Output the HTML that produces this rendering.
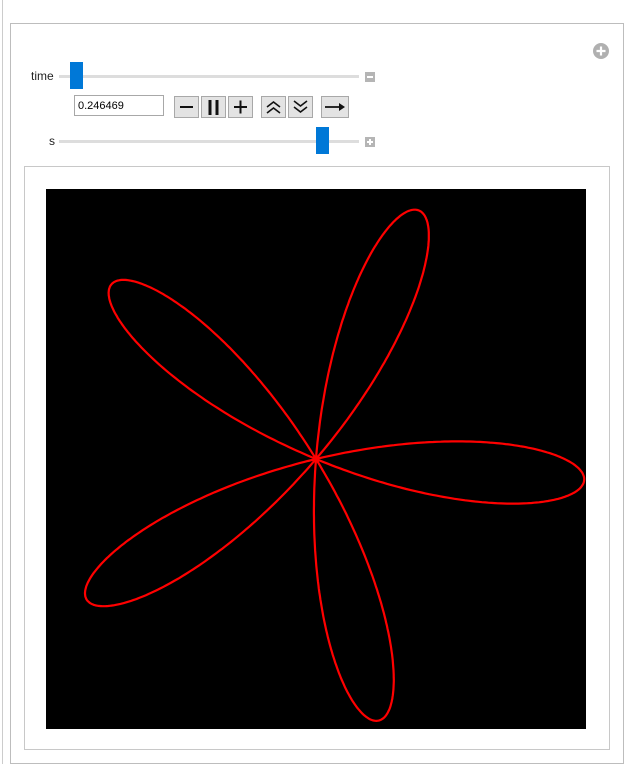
<!DOCTYPE html>
<html><head><style>
body{margin:0;width:636px;height:764px;background:#fff;position:relative;overflow:hidden;font-family:"Liberation Sans",sans-serif}
.a{position:absolute;box-sizing:border-box}
.btn{position:absolute;top:96px;height:22px;background:#e3e3e3;border:1px solid #a8a8a8;box-sizing:border-box}
</style></head><body>
<div class="a" style="left:0;top:0;width:3px;height:764px;border-right:1px solid #ccc"></div>
<div class="a" style="left:10px;top:23px;width:614px;height:741px;border:1px solid #bdbdbd"></div>
<svg class="a" style="left:592px;top:42px" width="18" height="18"><circle cx="9" cy="9" r="8" fill="#b0b0b0"/><path d="M4.5 9h9M9 4.5v9" stroke="#fff" stroke-width="2.2"/></svg>
<div class="a" style="left:31px;top:69px;font-size:12px;color:#222">time</div>
<div class="a" style="left:59px;top:75px;width:300px;height:3px;background:#ddd"></div>
<div class="a" style="left:70px;top:62px;width:13px;height:27px;background:#0078d7"></div>
<div class="a" style="left:365px;top:72px;width:10px;height:10px;background:#b5b5b5"><div class="a" style="left:2px;top:4px;width:6px;height:2px;background:#fff"></div></div>
<div class="a" style="left:74px;top:95px;width:90px;height:21px;border:1px solid #a8a8a8;font-size:11px;padding:4px 0 0 3px">0.246469</div>
<div class="btn" style="left:174px;width:25px"><svg width="23" height="20"><path d="M5 10h13" stroke="#111" stroke-width="2"/></svg></div>
<div class="btn" style="left:201px;width:25px"><svg width="23" height="20"><path d="M8 3v15M15 3v15" stroke="#111" stroke-width="3"/></svg></div>
<div class="btn" style="left:228px;width:25px"><svg width="23" height="20"><path d="M5 10h13M11.5 3.5v13" stroke="#111" stroke-width="2"/></svg></div>
<div class="btn" style="left:261px;width:25px"><svg width="23" height="20"><path d="M5 10l6.5-5 6.5 5M5 16l6.5-5 6.5 5" stroke="#111" stroke-width="1.6" fill="none"/></svg></div>
<div class="btn" style="left:288px;width:25px"><svg width="23" height="20"><path d="M5 4l6.5 5 6.5-5M5 10l6.5 5 6.5-5" stroke="#111" stroke-width="1.6" fill="none"/></svg></div>
<div class="btn" style="left:321px;width:28px"><svg width="26" height="20"><path d="M3 10h18" stroke="#111" stroke-width="1.8"/><path d="M17 6l6 4-6 4z" fill="#111"/></svg></div>
<div class="a" style="left:49px;top:134px;font-size:12px;color:#222">s</div>
<div class="a" style="left:59px;top:140px;width:300px;height:3px;background:#ddd"></div>
<div class="a" style="left:316px;top:127px;width:13px;height:27px;background:#0078d7"></div>
<div class="a" style="left:365px;top:137px;width:10px;height:10px;background:#b5b5b5"><div class="a" style="left:2px;top:4px;width:6px;height:2px;background:#fff"></div><div class="a" style="left:4px;top:2px;width:2px;height:6px;background:#fff"></div></div>
<div class="a" style="left:24px;top:166px;width:586px;height:584px;border:1px solid #c8c8c8"></div>
<svg class="a" style="left:46px;top:189px" width="540" height="540"><rect width="540" height="540" fill="#000"/><path id="p" fill="none" stroke="#f00" stroke-width="2.2"/></svg>
<script>
var d="",cx=270,cy=270,R=269,t0=-4.5*Math.PI/180;
for(var i=0;i<=1000;i++){var t=i/1000*Math.PI;var r=R*Math.cos(5*(t-t0));var x=cx+r*Math.cos(t),y=cy-r*Math.sin(t);d+=(i?"L":"M")+x.toFixed(1)+" "+y.toFixed(1);}
document.getElementById("p").setAttribute("d",d);
</script>
</body></html>
